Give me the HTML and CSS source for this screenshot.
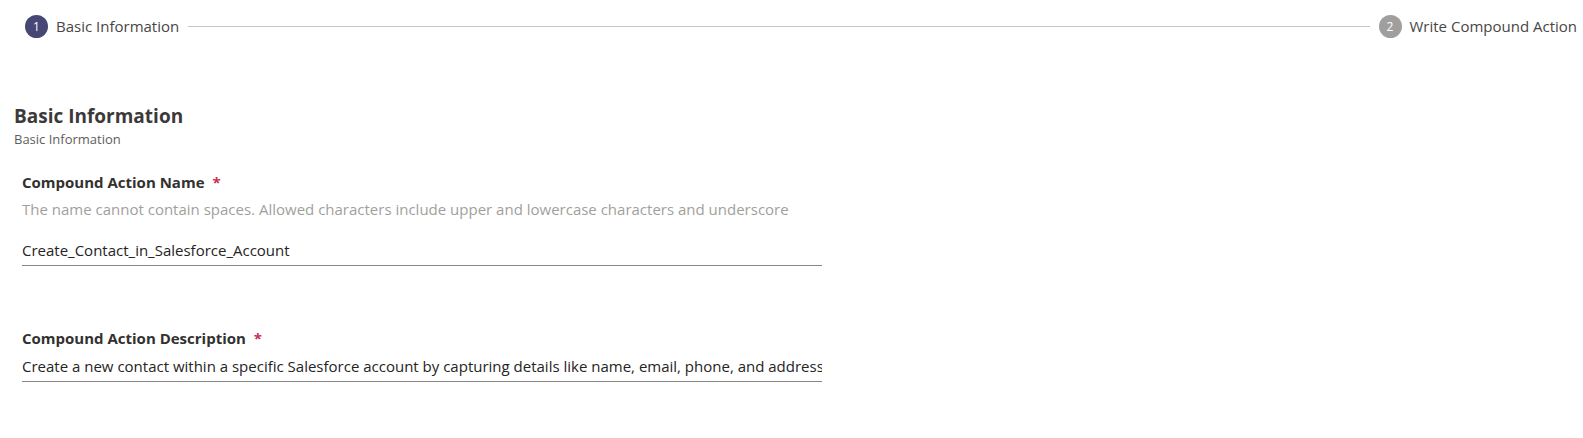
FILE: index.html
```html
<!DOCTYPE html>
<html lang="en">
<head>
<meta charset="utf-8">
<title>Compound Action</title>
<link rel="stylesheet" href="styles.css">
</head>
<body>
<div class="stepper">
  <div class="step active"><span class="dot">1</span><span class="step-label">Basic Information</span></div>
  <div class="connector"></div>
  <div class="step"><span class="dot">2</span><span class="step-label">Write Compound Action</span></div>
</div>
<section class="section">
  <h2 class="section-title">Basic Information</h2>
  <div class="section-sub">Basic Information</div>
  <div class="field first">
    <label class="field-label">Compound Action Name <span class="req">*</span></label>
    <div class="help">The name cannot contain spaces. Allowed characters include upper and lowercase characters and underscore</div>
    <input class="text-input" type="text" value="Create_Contact_in_Salesforce_Account">
  </div>
  <div class="field second">
    <label class="field-label">Compound Action Description <span class="req">*</span></label>
    <input class="text-input" type="text" value="Create a new contact within a specific Salesforce account by capturing details like name, email, phone, and address information.">
  </div>
</section>
</body>
</html>
```
FILE: styles.css
```css
* { box-sizing: border-box; }
body {
  margin: 0;
  background: #fff;
  font-family: "Open Sans", "Noto Sans", sans-serif;
  color: #323130;
}
.stepper {
  display: flex;
  align-items: center;
  padding: 0 6px 0 25px;
  height: 52px;
}
.step {
  display: flex;
  align-items: center;
  gap: 8px;
}
.dot {
  width: 23px;
  height: 23px;
  border-radius: 50%;
  background: #a19f9d;
  color: #fff;
  font-size: 12px;
  display: flex;
  align-items: center;
  justify-content: center;
}
.step.active .dot { background: #464775; }
.step-label {
  font-size: 15px;
  color: #484644;
}
.connector {
  flex: 1;
  height: 1px;
  background: #c8c6c4;
  margin: 0 9px;
}
.section {
  padding: 52px 14px 0 14px;
}
.section-title {
  margin: 0;
  font-size: 19px;
  font-weight: 700;
  line-height: 24px;
  color: #3b3a39;
}
.section-sub {
  font-size: 13px;
  color: #605e5c;
  line-height: 16px;
  margin-top: 3px;
}
.field {
  padding-left: 8px;
  width: 808px;
}
.field.first { margin-top: 25px; }
.field.second { margin-top: 62px; }
.field-label {
  display: block;
  font-size: 15px;
  font-weight: 700;
  line-height: 20px;
  color: #323130;
}
.req { color: #c4314b; margin-left: 4px; }
.help {
  font-size: 15px;
  color: #a19f9d;
  line-height: 20px;
  margin-top: 7px;
}
.text-input {
  display: block;
  width: 100%;
  border: none;
  border-bottom: 1px solid #8a8886;
  font-family: inherit;
  font-size: 15px;
  color: #252423;
  padding: 0;
  height: 31px;
  margin-top: 16px;
  outline: none;
  background: transparent;
}
.field.second .text-input { margin-top: 3px; }
```
